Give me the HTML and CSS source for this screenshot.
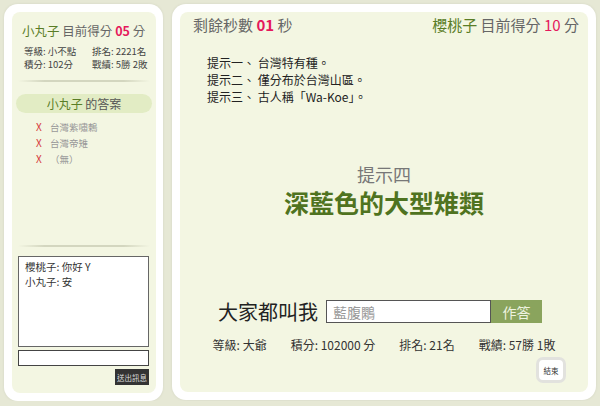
FILE: index.html
```html
<!DOCTYPE html>
<html>
<head>
	<meta charset="utf-8">
	<title>猜猜我是誰</title>
	<link rel="stylesheet" href="styles.css">
</head>
<body>
	<div id="principal">
		<div class="panel panel-lado">
			<div class="panel-in lado">
				<div class="placar"><span class="nome">小丸子</span> 目前得分 <b class="num">05</b> 分</div>
				<div class="dados">
					<span>等級: 小不點</span><span>排名: 2221名</span>
					<span>積分: 102分</span><span>戰績: 5勝 2敗</span>
				</div>
				<div class="sep"></div>
				<div class="resp-titulo"><span class="nome">小丸子</span> 的答案</div>
				<ul class="respostas">
					<li><span class="x">X</span>台灣紫嘯鶇</li>
					<li><span class="x">X</span>台灣帝雉</li>
					<li><span class="x">X</span>（無）</li>
				</ul>
				<div class="espaco"></div>
				<div class="sep"></div>
				<div class="chat">
					<div>櫻桃子: 你好 Y</div>
					<div>小丸子: 安</div>
				</div>
				<input class="chat-input" type="text">
				<button class="chat-enviar">送出訊息</button>
			</div>
		</div>

		<div class="panel panel-jogo">
			<div class="panel-in jogo">
				<div class="topo">
					<div>剩餘秒數 <b class="num">01</b> 秒</div>
					<div><span class="nome">櫻桃子</span> 目前得分 <span class="num">10</span> 分</div>
				</div>
				<ul class="dicas">
					<li>提示一、 台灣特有種。</li>
					<li>提示二、 僅分布於台灣山區。</li>
					<li>提示三、 古人稱「Wa-Koe」。</li>
				</ul>
				<div class="dica4">提示四</div>
				<div class="dica4-texto">深藍色的大型雉類</div>
				<div class="resposta">
					<span class="chamam">大家都叫我</span>
					<input class="resposta-input" type="text" value="藍腹鷴">
					<button class="resposta-btn">作答</button>
				</div>
				<div class="info">
					<span>等級: 大爺</span>
					<span>積分: 102000 分</span>
					<span>排名: 21名</span>
					<span>戰績: 57勝 1敗</span>
				</div>
				<div class="fim-linha">
					<button class="fim">結束</button>
				</div>
			</div>
		</div>
	</div>
</body>
</html>
```

FILE: styles.css
```css
* {
	font-family: "Noto Sans CJK TC", "Noto Sans", sans-serif;
	box-sizing: border-box;
}

body {
	margin: 0;
	background-color: #e6e8d5;
}

#principal {
	display: flex;
	gap: 9px;
	padding: 4px 4px 0 4px;
}

.panel {
	background-color: #fff;
	border-radius: 14px;
	padding: 8px;
	height: 397px;
	box-shadow: 0 0 3px rgba(0, 0, 0, .08);
}

.panel-lado {
	width: 159px;
	padding-right: 7px;
}

.panel-jogo {
	width: 424px;
	height: 396px;
}

.panel-in {
	background-color: #f3f6e2;
	border-radius: 8px;
	height: 100%;
	display: flex;
	flex-direction: column;
	color: #666;
}

.nome {
	color: #5a7d26;
}

.num {
	color: #e5195c;
}

/* lado esquerdo */
.placar {
	margin-top: 11px;
	padding-left: 10px;
	font-size: 12.5px;
	line-height: 16px;
}

.dados {
	display: grid;
	grid-template-columns: 68px auto;
	margin-top: 6px;
	padding-left: 12px;
	font-size: 9.5px;
	line-height: 12.5px;
	color: #444;
}

.sep {
	height: 2px;
	margin: 10px 6px 0 6px;
	background: linear-gradient(to right, rgba(200, 203, 180, 0), #d3d6bf 20%, #d3d6bf 80%, rgba(200, 203, 180, 0));
}

.resp-titulo {
	margin: 12px 4px 0 4px;
	height: 19px;
	line-height: 19px;
	border-radius: 10px;
	background-color: #e2ecc4;
	text-align: center;
	font-size: 12px;
	color: #555;
}

.respostas {
	list-style: none;
	margin: 6px 0 0 0;
	padding: 0 0 0 24px;
	font-size: 9.5px;
	line-height: 15px;
	color: #999;
}

.respostas .x {
	display: inline-block;
	width: 14px;
	color: #d63a3a;
	font-size: 10px;
}

.espaco {
	flex-grow: 1;
}

.chat {
	margin: 9px 0 0 6px;
	width: 131px;
	height: 91px;
	background-color: #fff;
	border: 1px solid #666;
	padding: 2px 6px;
	font-size: 10.5px;
	line-height: 15px;
	color: #333;
}

.chat-input {
	margin: 3px 0 0 6px;
	width: 131px;
	height: 16px;
	border: 1px solid #444;
	background-color: #fff;
}

.chat-enviar {
	align-self: flex-end;
	margin: 3px 7px 8px 0;
	width: 34px;
	height: 16px;
	padding: 0;
	border: 0;
	background-color: #333;
	color: #ddd;
	font-size: 7.5px;
}

/* jogo */
.topo {
	display: flex;
	justify-content: space-between;
	margin-top: 4px;
	padding: 0 9px 0 13px;
	font-size: 15px;
	line-height: 18px;
}

.dicas {
	list-style: none;
	margin: 20px 0 0 0;
	padding: 0 0 0 27px;
	font-size: 12px;
	line-height: 17px;
	color: #222;
}

.dica4 {
	margin-top: 57px;
	text-align: center;
	font-size: 18px;
	line-height: 24px;
	color: #777;
}

.dica4-texto {
	margin-top: 1px;
	text-align: center;
	font-size: 25px;
	line-height: 30px;
	font-weight: 700;
	color: #4f7320;
}

.resposta {
	display: flex;
	align-items: center;
	justify-content: center;
	margin-top: 83px;
	height: 23px;
	padding-right: 8px;
}

.chamam {
	font-size: 20px;
	color: #222;
	margin-right: 8px;
}

.resposta-input {
	width: 165px;
	height: 23px;
	border: 1px solid #555;
	background-color: #fff;
	padding: 0 6px;
	font-size: 14px;
	color: #999;
}

.resposta-btn {
	width: 51px;
	height: 23px;
	border: 0;
	padding: 0;
	background-color: #8aa45d;
	color: #eef3e0;
	font-size: 14px;
}

.info {
	display: flex;
	justify-content: center;
	gap: 24px;
	margin-top: 14px;
	font-size: 12px;
	line-height: 16px;
	color: #333;
}

.fim-linha {
	display: flex;
	justify-content: flex-end;
	margin-top: 4px;
	padding-right: 22px;
}

.fim {
	width: 30px;
	height: 26px;
	padding: 0;
	border: 3px solid #e2e2de;
	border-radius: 7px;
	background-color: #fff;
	color: #333;
	font-size: 7.5px;
}
```
